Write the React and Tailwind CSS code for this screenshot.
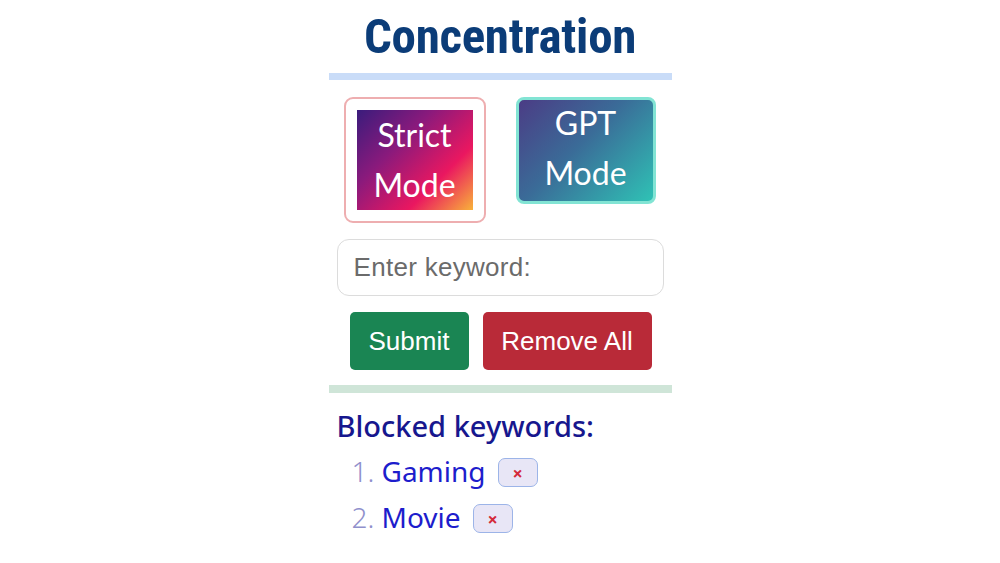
export default function App() {
  const items = ["Gaming", "Movie"];
  return (
    <div className="w-full h-[563px] bg-white flex justify-center overflow-hidden">
      <div className="w-[343px] flex flex-col">
        <h1
          className="text-center font-bold text-[49px] leading-[56px] mt-[9px] text-[#0b3c78] tracking-[-0.3px]"
          style={{ fontFamily: '"Liberation Sans Narrow", "Roboto Condensed", Roboto, sans-serif' }}
        >
          Concentration
        </h1>
        <div className="h-[7px] bg-[#c9dcf8] mt-[8px]" />

        {/* mode toggles */}
        <div className="flex justify-between items-start px-[15px] mt-[17px]" style={{ fontFamily: 'Lato, "Noto Sans", sans-serif' }}>
          <button className="w-[142px] h-[126px] rounded-[9px] border-[2px] border-[#eeaeb0] bg-white p-[11px] flex">
            <div className="flex-1 flex flex-col items-center justify-center text-white text-[32px] leading-[50px] bg-[linear-gradient(135deg,#3a1c7c_0%,#8a1a7c_35%,#ea1760_70%,#f8b23a_100%)]">
              <span>Strict</span>
              <span>Mode</span>
            </div>
          </button>
          <button className="w-[140px] h-[107px] mr-[1px] rounded-[8px] border-[3px] border-[#82e4d4] flex flex-col items-center text-white text-[32px] leading-[50px] bg-[linear-gradient(135deg,#4b3c85_0%,#3a6c98_45%,#2fc2b5_100%)]">
            <span className="-mt-[2px]">GPT</span>
            <span>Mode</span>
          </button>
        </div>

        <div className="mx-[8px] mt-[16px] h-[57px] rounded-[12px] border border-[#dcdcdc] flex items-center px-[16px]">
          <span className="text-[26px] tracking-[0.3px] text-[#6b6b6b]" style={{ fontFamily: '"Liberation Sans", Arial, sans-serif' }}>
            Enter keyword:
          </span>
        </div>

        <div className="flex gap-[14px] pl-[21px] mt-[16px]" style={{ fontFamily: '"Liberation Sans", Arial, sans-serif' }}>
          <button className="w-[119px] h-[58px] rounded-[5px] bg-[#1a8553] text-white text-[26px]">Submit</button>
          <button className="w-[169px] h-[58px] rounded-[5px] bg-[#b92a38] text-white text-[26px]">Remove All</button>
        </div>

        <div className="h-[8px] bg-[#cfe5d8] mt-[15px]" />

        <div className="pl-[8px] mt-[15px]" style={{ fontFamily: '"Noto Sans", "Open Sans", sans-serif' }}>
          <div className="text-[29px] leading-[36px] font-medium text-[#17178e]">Blocked keywords:</div>
          <ol className="mt-[10px] pl-[15px] flex flex-col gap-[11px]">
            {items.map((t, i) => (
              <li key={t} className="flex items-center text-[28px] leading-[35px]">
                <span className="text-[#9090cc] font-light w-[30px]">{i + 1}.</span>
                <span className="text-[#1d1dcc]">{t}</span>
                <span className="ml-[12px] mt-[2px] w-[40px] h-[29px] rounded-[7px] border border-[#9cb4e8] bg-[#e8e6f6] flex items-center justify-center text-[#d42a3a] text-[18px] font-bold leading-none">
                  ×
                </span>
              </li>
            ))}
          </ol>
        </div>
      </div>
    </div>
  );
}
